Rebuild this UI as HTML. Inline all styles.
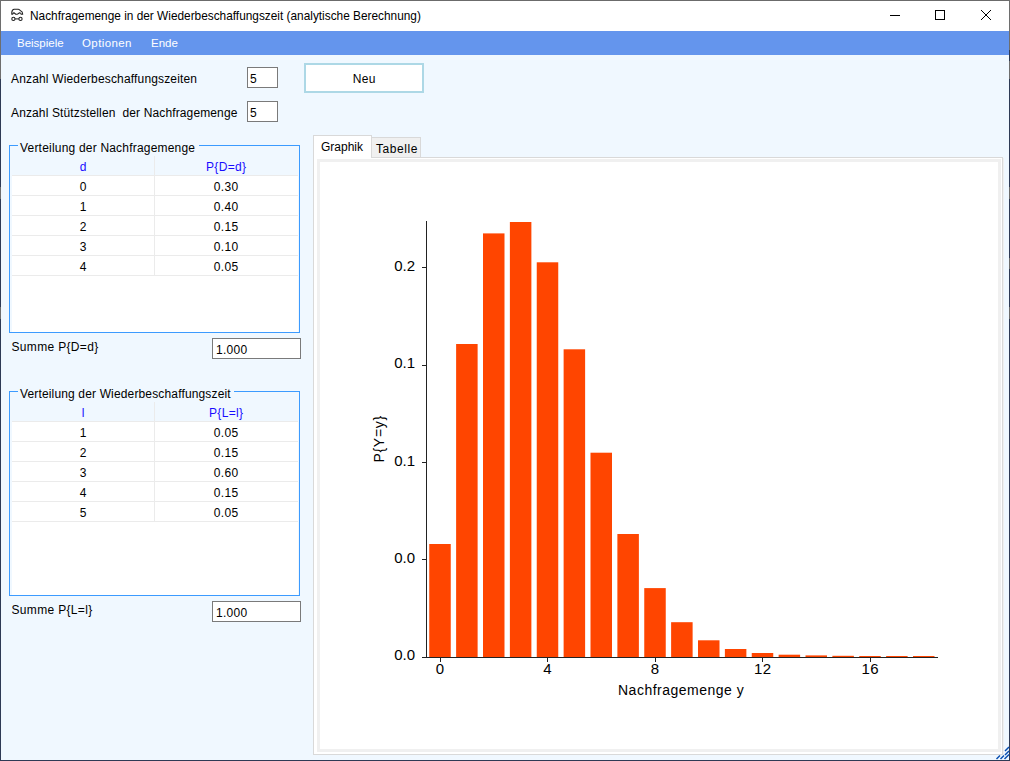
<!DOCTYPE html>
<html><head><meta charset="utf-8">
<style>
html,body{margin:0;padding:0}
body{width:1010px;height:761px;position:relative;overflow:hidden;background:#f0f8ff;font-family:"Liberation Sans",sans-serif;color:#000}
.a{position:absolute}
.t{position:absolute;font-size:12px;line-height:14px;white-space:pre}
.c{position:absolute;font-size:12px;line-height:14px;white-space:pre;text-align:center;letter-spacing:0.3px;text-indent:0.3px}
.tb{position:absolute;box-sizing:border-box;border:1px solid #7a7a7a;background:#fff}
.gb{position:absolute;box-sizing:border-box;border:1px solid #3c9bff}
.hl{position:absolute;height:1px;background:#ebebeb}
.vl{position:absolute;width:1px;background:#ebebeb}
.hd{color:#1a0cff}
</style></head><body>
<!-- window borders -->
<div class="a" style="left:0;top:0;width:1010px;height:1px;background:#6b6b6b"></div>
<div class="a" style="left:0;top:0;width:1px;height:761px;background:#2e3a55"></div>
<div class="a" style="left:0;top:0;width:1px;height:79px;background:#6e6e6e"></div>
<div class="a" style="left:0;top:187px;width:1px;height:12px;background:#6e6e6e"></div>
<div class="a" style="left:0;top:307px;width:1px;height:12px;background:#6e6e6e"></div>
<div class="a" style="left:1009px;top:0;width:1px;height:761px;background:#2e3a55"></div>
<div class="a" style="left:1009px;top:0;width:1px;height:50px;background:#6e6e6e"></div>
<div class="a" style="left:1009px;top:61px;width:1px;height:18px;background:#6e6e6e"></div>
<div class="a" style="left:1009px;top:187px;width:1px;height:12px;background:#6e6e6e"></div>
<div class="a" style="left:1009px;top:258px;width:1px;height:11px;background:#6e6e6e"></div>
<div class="a" style="left:1009px;top:307px;width:1px;height:12px;background:#6e6e6e"></div>
<div class="a" style="left:0;top:760px;width:1010px;height:1px;background:#2e3a55"></div>
<!-- title bar -->
<div class="a" style="left:1px;top:1px;width:1008px;height:30px;background:#fff"></div>
<svg class="a" style="left:0;top:0" width="40" height="30" viewBox="0 0 40 30">
<path d="M11.8 14.3 V12.4 C12 10.6 12.8 9.4 14.2 9.3 H18.2 C19 9.3 19.7 10 20.6 10.7 C22 11.2 22.7 12.4 22.7 14.3 H21.2 C21 13.3 20.2 12.7 19.3 12.9 C18.4 13.2 18 14.3 17.2 14.3 H16.1 C15.2 14.3 14.9 13 13.9 12.9 C13 12.8 12.9 14.3 12.6 14.3 Z" fill="none" stroke="#222" stroke-width="1.1" stroke-linejoin="round"/>
<circle cx="13.4" cy="18.9" r="1.6" fill="none" stroke="#222" stroke-width="1.1"/>
<circle cx="20.5" cy="18.9" r="1.6" fill="none" stroke="#222" stroke-width="1.1"/>
<rect x="15" y="18.4" width="4" height="1" fill="#222"/>
</svg>
<div class="t" style="left:30px;top:9px;font-size:11.85px">Nachfragemenge in der Wiederbeschaffungszeit (analytische Berechnung)</div>
<div class="a" style="left:890px;top:15px;width:10px;height:1px;background:#000"></div>
<div class="a" style="left:935px;top:10px;width:10px;height:10px;box-sizing:border-box;border:1px solid #000"></div>
<svg class="a" style="left:980px;top:9px" width="13" height="13" viewBox="0 0 13 13"><path d="M1 1 L11 11 M11 1 L1 11" stroke="#000" stroke-width="1"/></svg>
<!-- menu -->
<div class="a" style="left:1px;top:31px;width:1008px;height:24px;background:#6495ed"></div>
<div class="t" style="left:17px;top:36px;font-size:11.5px;color:#fff">Beispiele</div>
<div class="t" style="left:82px;top:36px;font-size:11.5px;color:#fff;letter-spacing:0.4px">Optionen</div>
<div class="t" style="left:151px;top:36px;font-size:11.5px;color:#fff">Ende</div>
<!-- bottom-right form bg -->
<!-- top controls -->
<div class="t" style="left:11px;top:72px;letter-spacing:0.16px">Anzahl Wiederbeschaffungszeiten</div>
<div class="t" style="left:11px;top:106px;letter-spacing:0.13px">Anzahl Stützstellen  der Nachfragemenge</div>
<div class="tb" style="left:247px;top:67px;width:31px;height:21px"></div>
<div class="t" style="left:250px;top:72px">5</div>
<div class="tb" style="left:247px;top:101px;width:31px;height:21px"></div>
<div class="t" style="left:250px;top:106px">5</div>
<div class="a" style="left:304px;top:63px;width:120px;height:30px;box-sizing:border-box;border:2px solid #add8e6;background:#fff"></div>
<div class="c" style="left:304px;width:120px;top:72px">Neu</div>

<!-- group 1 -->
<div class="gb" style="left:9px;top:145px;width:291px;height:188px"></div>
<div class="a" style="left:12px;top:156px;width:286px;height:176px;background:#fff"></div>
<div class="a" style="left:12px;top:156px;width:286px;height:19px;background:#f0f8ff"></div>
<div class="a" style="left:18px;top:140px;width:181px;height:8px;background:#f0f8ff"></div>
<div class="t" style="left:20px;top:141px;letter-spacing:0.2px">Verteilung der Nachfragemenge</div>
<div class="vl" style="left:154px;top:156px;height:120px"></div>
<div class="hl" style="left:12px;top:175px;width:286px"></div>
<div class="hl" style="left:12px;top:195px;width:286px"></div>
<div class="hl" style="left:12px;top:215px;width:286px"></div>
<div class="hl" style="left:12px;top:235px;width:286px"></div>
<div class="hl" style="left:12px;top:255px;width:286px"></div>
<div class="hl" style="left:12px;top:275px;width:286px"></div>
<div class="c hd" style="left:12px;width:142px;top:160px">d</div>
<div class="c hd" style="left:155px;width:142px;top:160px">P{D=d}</div>
<div class="c" style="left:12px;width:142px;top:180px">0</div>
<div class="c" style="left:155px;width:142px;top:180px">0.30</div>
<div class="c" style="left:12px;width:142px;top:200px">1</div>
<div class="c" style="left:155px;width:142px;top:200px">0.40</div>
<div class="c" style="left:12px;width:142px;top:220px">2</div>
<div class="c" style="left:155px;width:142px;top:220px">0.15</div>
<div class="c" style="left:12px;width:142px;top:240px">3</div>
<div class="c" style="left:155px;width:142px;top:240px">0.10</div>
<div class="c" style="left:12px;width:142px;top:260px">4</div>
<div class="c" style="left:155px;width:142px;top:260px">0.05</div>
<div class="t" style="left:11.5px;top:340px;letter-spacing:0.33px">Summe P{D=d}</div>
<div class="tb" style="left:212px;top:338px;width:89px;height:21px"></div>
<div class="t" style="left:216px;top:343px;letter-spacing:0.3px">1.000</div>

<!-- group 2 -->
<div class="gb" style="left:9px;top:391px;width:291px;height:205px"></div>
<div class="a" style="left:12px;top:402px;width:286px;height:193px;background:#fff"></div>
<div class="a" style="left:12px;top:402px;width:286px;height:19px;background:#f0f8ff"></div>
<div class="a" style="left:18px;top:386px;width:216px;height:8px;background:#f0f8ff"></div>
<div class="t" style="left:20px;top:387px;letter-spacing:0.15px">Verteilung der Wiederbeschaffungszeit</div>
<div class="vl" style="left:154px;top:402px;height:120px"></div>
<div class="hl" style="left:12px;top:421px;width:286px"></div>
<div class="hl" style="left:12px;top:441px;width:286px"></div>
<div class="hl" style="left:12px;top:461px;width:286px"></div>
<div class="hl" style="left:12px;top:481px;width:286px"></div>
<div class="hl" style="left:12px;top:501px;width:286px"></div>
<div class="hl" style="left:12px;top:521px;width:286px"></div>
<div class="c hd" style="left:12px;width:142px;top:406px">l</div>
<div class="c hd" style="left:155px;width:142px;top:406px">P{L=l}</div>
<div class="c" style="left:12px;width:142px;top:426px">1</div>
<div class="c" style="left:155px;width:142px;top:426px">0.05</div>
<div class="c" style="left:12px;width:142px;top:446px">2</div>
<div class="c" style="left:155px;width:142px;top:446px">0.15</div>
<div class="c" style="left:12px;width:142px;top:466px">3</div>
<div class="c" style="left:155px;width:142px;top:466px">0.60</div>
<div class="c" style="left:12px;width:142px;top:486px">4</div>
<div class="c" style="left:155px;width:142px;top:486px">0.15</div>
<div class="c" style="left:12px;width:142px;top:506px">5</div>
<div class="c" style="left:155px;width:142px;top:506px">0.05</div>
<div class="t" style="left:11.5px;top:603px;letter-spacing:0.33px">Summe P{L=l}</div>
<div class="tb" style="left:212px;top:601px;width:89px;height:21px"></div>
<div class="t" style="left:216px;top:606px;letter-spacing:0.3px">1.000</div>

<!-- tab control -->
<div class="a" style="left:313px;top:157px;width:690px;height:598px;box-sizing:border-box;border:1px solid #d9d9d9;background:#fff"></div>
<div class="a" style="left:1003px;top:158px;width:1px;height:597px;background:#f0f0f0"></div>
<div class="a" style="left:371px;top:137px;width:50px;height:21px;box-sizing:border-box;border:1px solid #d9d9d9;background:#f0f0f0"></div>
<div class="a" style="left:313px;top:135px;width:59px;height:23px;box-sizing:border-box;border:1px solid #d9d9d9;border-bottom:none;background:#fff"></div>
<div class="t" style="left:321px;top:140px">Graphik</div>
<div class="t" style="left:376px;top:142px;letter-spacing:0.55px">Tabelle</div>
<div class="a" style="left:317px;top:159px;width:684px;height:593px;box-sizing:border-box;border:3px solid #f0f0f0;background:#fff"></div>

<!-- chart -->
<svg class="a" style="left:0;top:0" width="1010" height="761" viewBox="0 0 1010 761">
<g fill="#ff4500">
<rect x="429.25" y="544.0" width="21.5" height="113.0"/><rect x="456.12" y="344.0" width="21.5" height="313.0"/><rect x="483.00" y="233.4" width="21.5" height="423.6"/><rect x="509.88" y="222.0" width="21.5" height="435.0"/><rect x="536.75" y="262.3" width="21.5" height="394.7"/><rect x="563.62" y="349.3" width="21.5" height="307.7"/><rect x="590.50" y="452.7" width="21.5" height="204.3"/><rect x="617.38" y="534.0" width="21.5" height="123.0"/><rect x="644.25" y="588.1" width="21.5" height="68.9"/><rect x="671.12" y="622.2" width="21.5" height="34.8"/><rect x="698.00" y="640.3" width="21.5" height="16.7"/><rect x="724.88" y="649.0" width="21.5" height="8.0"/><rect x="751.75" y="653.0" width="21.5" height="4.0"/><rect x="778.62" y="654.7" width="21.5" height="2.3"/><rect x="805.50" y="655.4" width="21.5" height="1.6"/><rect x="832.38" y="655.8" width="21.5" height="1.2"/><rect x="859.25" y="656.0" width="21.5" height="1.0"/><rect x="886.12" y="656.0" width="21.5" height="1.0"/><rect x="913.00" y="656.0" width="21.5" height="1.0"/>
</g>
<g fill="#222">
<rect x="426" y="221" width="1" height="437"/>
<rect x="422" y="657" width="516" height="1"/>
<rect x="422" y="267" width="4" height="1"/>
<rect x="422" y="365" width="4" height="1"/>
<rect x="422" y="462" width="4" height="1"/>
<rect x="422" y="559" width="4" height="1"/>
<rect x="440" y="658" width="1" height="4"/>
<rect x="547" y="658" width="1" height="4"/>
<rect x="655" y="658" width="1" height="4"/>
<rect x="762" y="658" width="1" height="4"/>
<rect x="870" y="658" width="1" height="4"/>
</g>
</svg>
<div class="t" style="left:335px;width:80px;text-align:right;top:258px;font-size:15px;line-height:16px">0.2</div>
<div class="t" style="left:335px;width:80px;text-align:right;top:355px;font-size:15px;line-height:16px">0.1</div>
<div class="t" style="left:335px;width:80px;text-align:right;top:453px;font-size:15px;line-height:16px">0.1</div>
<div class="t" style="left:335px;width:80px;text-align:right;top:550px;font-size:15px;line-height:16px">0.0</div>
<div class="t" style="left:335px;width:80px;text-align:right;top:647px;font-size:15px;line-height:16px">0.0</div>
<div class="c" style="left:400px;width:80px;top:661px;font-size:15px;line-height:16px">0</div>
<div class="c" style="left:507.5px;width:80px;top:661px;font-size:15px;line-height:16px">4</div>
<div class="c" style="left:615px;width:80px;top:661px;font-size:15px;line-height:16px">8</div>
<div class="c" style="left:722.5px;width:80px;top:661px;font-size:15px;line-height:16px">12</div>
<div class="c" style="left:830px;width:80px;top:661px;font-size:15px;line-height:16px">16</div>
<div class="c" style="left:581px;width:200px;top:682px;font-size:14px;line-height:16px;letter-spacing:0.5px">Nachfragemenge y</div>
<div class="c" style="left:279px;width:200px;top:431px;font-size:14px;line-height:16px;transform:rotate(-90deg);letter-spacing:0.7px">P{Y=y}</div>
<!-- resize grip -->
<svg class="a" style="left:990px;top:740px" width="20" height="21" viewBox="990 740 20 21">
<g stroke="#0a4fb0" stroke-width="1.5" stroke-linecap="butt">
<path d="M996.5 759 L1000 755.5 M1000.5 759 L1004 755.5 M1004.5 759 L1009 754.5 M1005 755 L1009 751 M1005 751 L1009 747"/>
</g></svg>
</body></html>
